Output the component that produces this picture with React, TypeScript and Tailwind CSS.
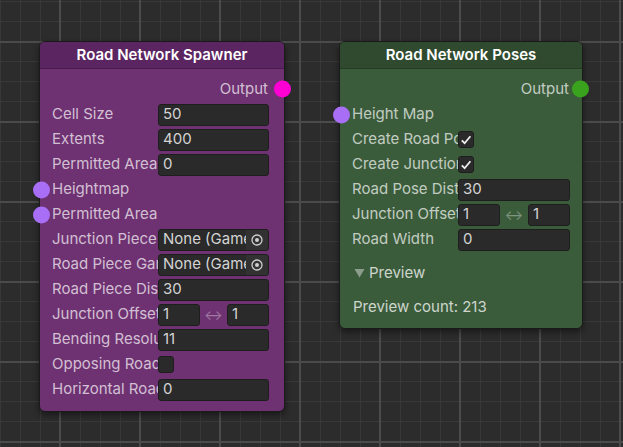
import type { ReactNode } from 'react';

const font = { fontFamily: 'Inter, "Noto Sans", sans-serif' };

function Port({ side, color }: { side: 'left' | 'right'; color: string }) {
  return (
    <span
      className={`absolute top-1/2 -translate-y-1/2 w-[17px] h-[17px] rounded-full ${
        side === 'left' ? 'left-[-7px]' : 'right-[-7px]'
      } ${color}`}
    />
  );
}

function Field({ children, className = 'flex-1' }: { children: ReactNode; className?: string }) {
  return (
    <div
      className={`${className} h-[22px] rounded-[3px] bg-[#2a2a2a] border border-[#1e1e1e] pl-[4px] flex items-center text-[#d4d4d4] overflow-hidden whitespace-nowrap`}
    >
      {children}
    </div>
  );
}

function ObjectField() {
  return (
    <div className="flex-1 h-[22px] rounded-[3px] bg-[#2a2a2a] border border-[#1e1e1e] flex items-center overflow-hidden">
      <span className="flex-1 pl-[4px] text-[#d4d4d4] whitespace-nowrap overflow-hidden">None (GameObject)</span>
      <span className="w-[22px] h-full bg-[#323232] flex items-center justify-center">
        <svg width="12" height="12" viewBox="0 0 12 12">
          <circle cx="6" cy="6" r="5" fill="none" stroke="#cfcfcf" strokeWidth="1.3" />
          <circle cx="6" cy="6" r="2" fill="#cfcfcf" />
        </svg>
      </span>
    </div>
  );
}

function Check({ on }: { on?: boolean }) {
  return (
    <div className="w-[16px] h-[17px] rounded-[3px] bg-[#2a2a2a] border border-[#1e1e1e] flex items-center justify-center">
      {on && (
        <svg width="12" height="12" viewBox="0 0 12 12">
          <path d="M1.8 6.4 L4.6 9.2 L10.4 2.2" fill="none" stroke="#f0f0f0" strokeWidth="1.8" />
        </svg>
      )}
    </div>
  );
}

function Pair() {
  return (
    <div className="flex-1 flex items-center">
      <Field className="w-[42px]">1</Field>
      <span className="flex-1 text-center text-white/35 text-[14px]">↔</span>
      <Field className="w-[42px]">1</Field>
    </div>
  );
}

function Row({ label, children, port, pr }: { label: string; children?: ReactNode; port?: string; pr: string }) {
  return (
    <div className={`relative h-[25px] flex items-center pl-[12px] ${pr}`}>
      {port && <Port side="left" color={port} />}
      <span className={`${children ? 'w-[106px] shrink-0' : ''} overflow-hidden whitespace-nowrap text-white/70`}>
        {label}
      </span>
      {children}
    </div>
  );
}

function Node({
  title,
  className,
  header,
  body,
  outPort,
  outPr,
  children,
}: {
  title: string;
  className: string;
  header: string;
  body: string;
  outPort: string;
  outPr: string;
  children: ReactNode;
}) {
  return (
    <div className={`absolute rounded-[6px] border border-[#1a1a1a] shadow-[0_3px_6px_rgba(0,0,0,0.45)] text-[15px] ${body} ${className}`}>
      <div className={`h-[27px] rounded-t-[5px] flex items-center justify-center text-white font-semibold text-[15px] border-b border-black/20 ${header}`}>
        {title}
      </div>
      <div className={`relative h-[26px] mt-[7px] flex items-center justify-end ${outPr} text-white/70`}>
        Output
        <Port side="right" color={outPort} />
      </div>
      {children}
    </div>
  );
}

export default function App() {
  const sp = 'pr-[15px]';
  const pp = 'pr-[12px]';
  return (
    <div
      style={font}
      className="relative w-[623px] h-[447px] overflow-hidden bg-[#2c2c2c] [background-image:linear-gradient(to_right,#4b4b4b_2px,transparent_2px),linear-gradient(to_bottom,#4b4b4b_2px,transparent_2px),linear-gradient(to_right,#383838_1px,transparent_1px),linear-gradient(to_bottom,#383838_1px,transparent_1px)] [background-size:80px_80px,80px_80px,20px_20px,20px_20px] [background-position:59px_0,0_41px,0_1px,0_1px]"
    >
      <Node
        title="Road Network Spawner"
        className="left-[39px] top-[41px] w-[246px] pb-[9px]"
        header="bg-[#5a2560]"
        body="bg-[#6e3171]"
        outPort="bg-[#ff00d4]"
        outPr="pr-[16px]"
      >
        <Row label="Cell Size" pr={sp}><Field>50</Field></Row>
        <Row label="Extents" pr={sp}><Field>400</Field></Row>
        <Row label="Permitted Area" pr={sp}><Field>0</Field></Row>
        <Row label="Heightmap" port="bg-[#a86ef6]" pr={sp} />
        <Row label="Permitted Area" port="bg-[#a86ef6]" pr={sp} />
        <Row label="Junction Piece Game Object" pr={sp}><ObjectField /></Row>
        <Row label="Road Piece Game Object" pr={sp}><ObjectField /></Row>
        <Row label="Road Piece Distance" pr={sp}><Field>30</Field></Row>
        <Row label="Junction Offset" pr={sp}><Pair /></Row>
        <Row label="Bending Resolution" pr={sp}><Field>11</Field></Row>
        <Row label="Opposing Road" pr={sp}><Check /></Row>
        <Row label="Horizontal Road" pr={sp}><Field>0</Field></Row>
      </Node>

      <Node
        title="Road Network Poses"
        className="left-[339px] top-[41px] w-[244px] pb-[9px]"
        header="bg-[#2f4a2f]"
        body="bg-[#3b5c3b]"
        outPort="bg-[#3aa31e]"
        outPr="pr-[13px]"
      >
        <Row label="Height Map" port="bg-[#a86ef6]" pr={pp} />
        <Row label="Create Road Poses" pr={pp}><Check on /></Row>
        <Row label="Create Junction Poses" pr={pp}><Check on /></Row>
        <Row label="Road Pose Distance" pr={pp}><Field>30</Field></Row>
        <Row label="Junction Offset" pr={pp}><Pair /></Row>
        <Row label="Road Width" pr={pp}><Field>0</Field></Row>
        <div className="h-[24px] mt-[9px] flex items-center pl-[14px] text-white/75">
          <svg width="11" height="10" viewBox="0 0 11 10" className="mr-[4px]">
            <path d="M0.5 1 L10.5 1 L5.5 9.5 Z" fill="#8c9c8c" />
          </svg>
          Preview
        </div>
        <div className="h-[24px] mt-[10px] flex items-center pl-[13px] text-white/75">Preview count: 213</div>
      </Node>
    </div>
  );
}
